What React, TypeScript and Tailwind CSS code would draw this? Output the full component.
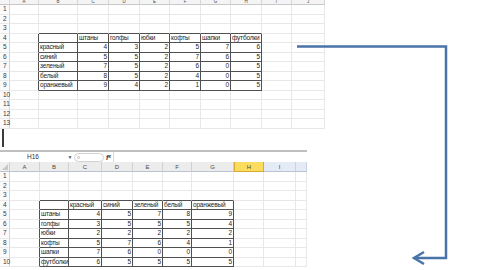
import React from "react";

const topData = [
  ["", "штаны", "голфы", "юбки", "кофты", "шапки", "футболки"],
  ["красный", "4", "3", "2", "5", "7", "6"],
  ["синий", "5", "5", "2", "7", "6", "5"],
  ["зеленый", "7", "5", "2", "6", "0", "5"],
  ["белый", "8", "5", "2", "4", "0", "5"],
  ["оранжевый", "9", "4", "2", "1", "0", "5"],
];

const bottomData = [
  ["", "красный", "синий", "зеленый", "белый", "оранжевый"],
  ["штаны", "4", "5", "7", "8", "9"],
  ["голфы", "3", "5", "5", "5", "4"],
  ["юбки", "2", "2", "2", "2", "2"],
  ["кофты", "5", "7", "6", "4", "1"],
  ["шапки", "7", "6", "0", "0", "0"],
  ["футболки", "6", "5", "5", "5", "5"],
];

type SheetProps = {
  gridClass: string;
  letters: string[];
  rowCount: number;
  data: string[][];
  tableRow: number;
  tableCol: number;
  topSheet?: boolean;
  highlight?: number;
  blue?: number[];
};

const Sheet = ({ gridClass, letters, rowCount, data, tableRow, tableCol, topSheet, highlight, blue = [] }: SheetProps) => {
  const inTable = (r: number, c: number) =>
    r >= tableRow && r < tableRow + data.length && c >= tableCol && c < tableCol + data[0].length;

  const cells: React.ReactNode[] = [];

  // header row
  cells.push(
    <div
      key="corner"
      className={
        topSheet
          ? "border-r border-b border-r-[#dadada] border-b-[#c8c8c8] bg-[#f4f4f4]"
          : "relative border-r border-b border-r-[#cfcfcf] border-b-[#b9c3d2] bg-[#efefef]"
      }
    >
      {!topSheet && (
        <svg className="absolute right-[1px] bottom-[1px]" width="6" height="6" viewBox="0 0 6 6">
          <path d="M6 0 L6 6 L0 6 Z" fill="#c7c7c7" />
        </svg>
      )}
    </div>
  );
  letters.forEach((l, i) => {
    const c = i + 1;
    let cls = "flex justify-center items-center overflow-hidden border-r border-b text-[#4a4a4a] ";
    if (topSheet) {
      cls += "bg-[#f4f4f4] border-r-[#d6d6d6] border-b-[#c8c8c8] text-[4.5px] leading-[4px]";
    } else if (c === highlight) {
      cls += "bg-[#fbdc5e] border-r-[#d7aa32] border-b-[#d7aa32] border-l border-l-[#d7aa32] text-[6px] leading-[6px]";
    } else if (blue.includes(c)) {
      cls += "bg-[#e5ebf6] border-r-[#c9d2e2] border-b-[#b9c3d2] text-[6px] leading-[6px]";
    } else {
      cls += "bg-[#ececec] border-r-[#d0d0d0] border-b-[#b9c3d2] text-[6px] leading-[6px]";
    }
    cells.push(
      <div key={"h" + i} className={cls}>
        {l}
      </div>
    );
  });

  for (let r = 1; r <= rowCount; r++) {
    cells.push(
      <div
        key={"r" + r}
        className="flex items-center pl-[3px] border-r border-b border-r-[#d3d3d3] border-b-[#eaeaea] bg-[#fbfbfb] text-[6.5px] text-[#3a3a3a] leading-none"
      >
        {r}
      </div>
    );
    for (let c = 1; c <= letters.length; c++) {
      const here = inTable(r, c);
      const rightDark = here || inTable(r, c + 1);
      const bottomDark = here || inTable(r + 1, c);
      const text = here ? data[r - tableRow][c - tableCol] : "";
      const isNum = /^\d+$/.test(text);
      cells.push(
        <div
          key={r + "-" + c}
          className={
            "flex items-center overflow-hidden whitespace-nowrap border-r border-b text-[6.5px] tracking-[-0.2px] leading-none text-[#1e1e1e] " +
            (rightDark ? "border-r-[#505050] " : "border-r-[#e8e8e8] ") +
            (bottomDark ? "border-b-[#505050] " : "border-b-[#e8e8e8] ") +
            (isNum ? "justify-end pr-[1px]" : "justify-start pl-[1px]")
          }
        >
          {text}
        </div>
      );
    }
  }

  return <div className={"grid " + gridClass}>{cells}</div>;
};

const App = () => {
  return (
    <div
      className="relative w-[480px] h-[270px] overflow-hidden bg-white"
      style={{ fontFamily: '"Liberation Sans", Arial, sans-serif' }}
    >
      <div className="flex flex-col">
        <div className="w-[325px] h-[129px] overflow-hidden">
          <Sheet
            gridClass="w-[325px] grid-cols-[10px_29px_39px_31px_31px_30px_31px_30px_31px_30px_33px] grid-rows-[5px_repeat(13,9.54px)]"
            letters={["A", "B", "C", "D", "E", "F", "G", "H", "I", "J"]}
            rowCount={13}
            data={topData}
            tableRow={4}
            tableCol={2}
            topSheet
          />
        </div>

        <div className="h-[21px] pl-[2px]">
          <div className="w-[2px] h-[18px] bg-[#3c3c3c]" />
        </div>

        <div className="w-[307px] h-[12px] flex items-center border-t-2 border-[#bfbfbf] bg-white">
          <div className="w-[66px] flex justify-center text-[6.5px] leading-none text-[#333]">H16</div>
          <div className="w-[8px] flex justify-center text-[5px] leading-none text-[#555]">▼</div>
          <div className="w-[30px] h-[9px] flex items-center rounded-full border border-[#d2d2d2] pl-[2px]">
            <div className="w-[3px] h-[3px] rounded-full border border-[#bcbcbc]" />
          </div>
          <div className="w-[9px] flex justify-center text-[7px] italic font-bold leading-none text-[#333]">
            f<span className="text-[5px]">x</span>
          </div>
          <div className="flex-1 h-[10px] border-l border-[#d8d8d8]" />
        </div>

        <div className="w-[307px] overflow-hidden">
          <Sheet
            gridClass="w-[307px] grid-cols-[10px_30px_29px_33px_31px_30px_29px_42px_30px_32px_11px] grid-rows-[10px_repeat(10,9.5px)]"
            letters={["A", "B", "C", "D", "E", "F", "G", "H", "I", ""]}
            rowCount={10}
            data={bottomData}
            tableRow={4}
            tableCol={2}
            highlight={8}
            blue={[9, 10]}
          />
        </div>
      </div>

      <svg className="absolute left-0 top-0 pointer-events-none" width="480" height="270" viewBox="0 0 480 270">
        <path d="M297 46.5 H446 V258 H414" fill="none" stroke="#4a73a9" strokeWidth="2.5" />
        <path d="M424 252 L414 258 L424 264" fill="none" stroke="#4a73a9" strokeWidth="2.5" strokeLinejoin="miter" />
      </svg>
    </div>
  );
};

export default App;
